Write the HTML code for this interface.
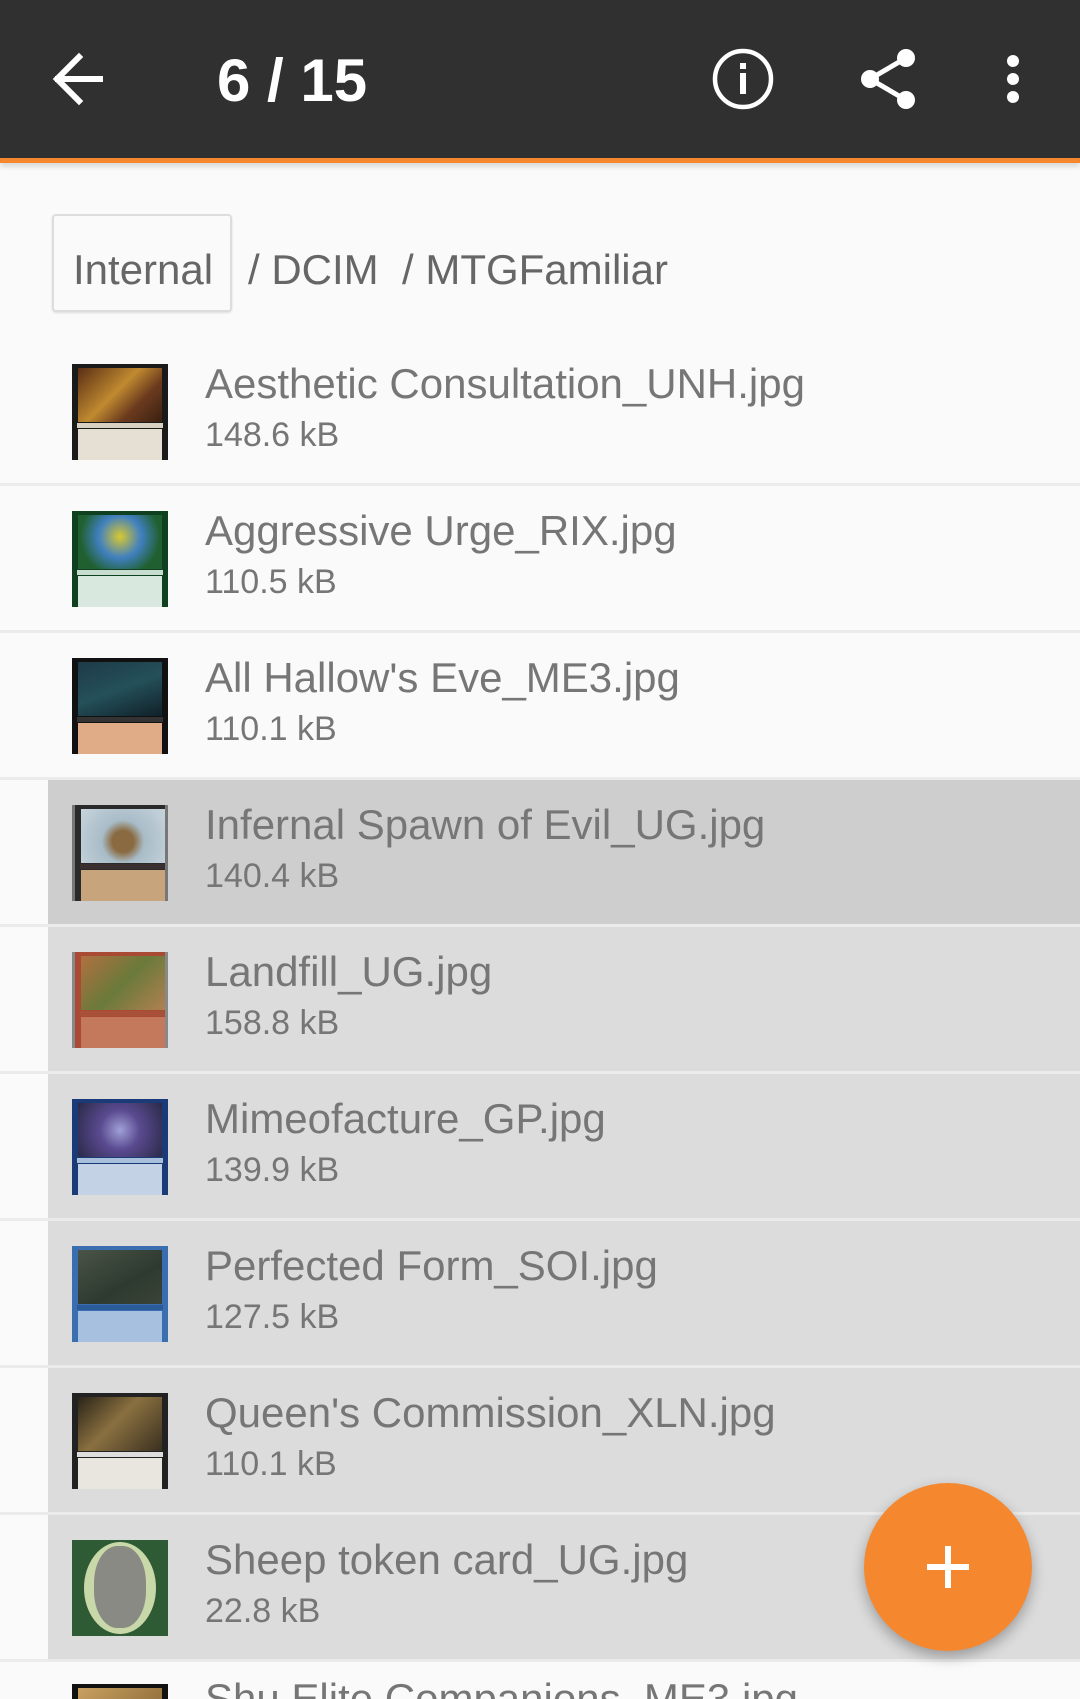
<!DOCTYPE html>
<html><head><meta charset="utf-8"><style>
*{margin:0;padding:0;box-sizing:border-box}
html,body{width:1080px;height:1699px;overflow:hidden}
body{background:#fafafa;font-family:"Liberation Sans",sans-serif}
#root{position:relative;width:1080px;height:1699px;overflow:hidden;background:#fafafa}
.bar{position:absolute;left:0;top:0;width:1080px;height:159px;background:#303030}
.ol{position:absolute;left:0;top:158px;width:1080px;height:5px;background:#f5882f;box-shadow:0 3px 6px rgba(0,0,0,.18)}
.title{position:absolute;left:217px;top:51px;font-size:60px;line-height:1;font-weight:bold;color:#fff}
.crumb{position:absolute;top:249px;font-size:42px;line-height:1;color:#666}
.chip{position:absolute;left:52px;top:214px;width:180px;height:98px;border:2px solid #ddd;border-radius:4px;background:#fafafa;box-shadow:0 1px 2px rgba(0,0,0,.12)}
.row{position:absolute;left:0;width:1080px;height:147px}
.sep{position:absolute;left:0;top:0;width:1080px;height:3px;background:#ebebeb}
.sel{position:absolute;left:48px;top:3px;width:1032px;height:144px;background:#dcdcdc}
.name{position:absolute;left:205px;top:27px;font-size:42px;line-height:1;color:#767676;white-space:nowrap}
.size{position:absolute;left:205px;top:82px;font-size:34px;line-height:1;color:#767676}
.th{position:absolute;left:72px;top:28px;width:96px;height:96px;overflow:hidden}
.art{position:absolute;left:6px;top:4px;width:84px;height:54px}
.tl{position:absolute;left:5px;top:59px;width:86px;height:5px}
.tb{position:absolute;left:6px;top:65px;width:84px;height:31px}
.fab{position:absolute;left:864px;top:1483px;width:168px;height:168px;border-radius:50%;background:#f5882f;box-shadow:0 6px 14px rgba(0,0,0,.3)}
</style></head><body><div id="root">
<div class="bar"></div><div class="ol"></div>
<svg style="position:absolute;left:0;top:0" width="1080" height="159">
<g stroke="#fff" stroke-width="6" fill="none" stroke-linecap="square">
<path d="M58 79H100M79 57L57 79L79 101"/>
</g>
<circle cx="743" cy="79" r="28" stroke="#fff" stroke-width="4.5" fill="none"/>
<rect x="740" y="73" width="6" height="21" fill="#fff"/><rect x="740" y="63" width="6" height="6" fill="#fff"/>
<g fill="#fff"><circle cx="906" cy="58" r="9"/><circle cx="870" cy="79" r="9"/><circle cx="906" cy="100" r="9"/></g>
<path d="M906 58L870 79L906 100" stroke="#fff" stroke-width="5" fill="none"/>
<g fill="#fff"><circle cx="1013" cy="61" r="6"/><circle cx="1013" cy="79" r="6"/><circle cx="1013" cy="97" r="6"/></g>
</svg>
<div class="title">6 / 15</div>
<div class="chip"></div>
<div class="crumb" style="left:73px">Internal</div>
<div class="crumb" style="left:248px">/ DCIM</div>
<div class="crumb" style="left:402px">/ MTGFamiliar</div>

<div class="row" style="top:336px"><div class="th" style="background:#1a1a1a"><div class="art" style="background:linear-gradient(135deg,#5a2e14,#c08a30 45%,#6b3a1e 70%,#3a2010)"></div><div class="tl" style="background:#d8d0c0"></div><div class="tb" style="background:#e6e0d4"></div></div><div class="name">Aesthetic Consultation_UNH.jpg</div><div class="size">148.6 kB</div></div>

<div class="row" style="top:483px"><div class="sep"></div><div class="th" style="background:#0f4020"><div class="art" style="background:radial-gradient(circle at 50% 40%,#d8c830,#4080c0 40%,#206030 75%)"></div><div class="tl" style="background:#c8dcd0"></div><div class="tb" style="background:#d8e8de"></div></div><div class="name">Aggressive Urge_RIX.jpg</div><div class="size">110.5 kB</div></div>

<div class="row" style="top:630px"><div class="sep"></div><div class="th" style="background:#111"><div class="art" style="background:linear-gradient(160deg,#1e3a48,#24505a 50%,#102028)"></div><div class="tl" style="background:#333"></div><div class="tb" style="background:#e0ac88"></div></div><div class="name">All Hallow's Eve_ME3.jpg</div><div class="size">110.1 kB</div></div>

<div class="row" style="top:777px"><div class="sep"></div><div class="sel" style="background:#cecece"></div><div class="th" style="background:#2a2a2a;border-left:3px solid #777;border-right:3px solid #777"><div class="art" style="background:radial-gradient(circle at 50% 60%,#8a6a40 20%,#a8bcc8 40%,#c8d4dc)"></div><div class="tl" style="background:#3a3030"></div><div class="tb" style="background:#c8a47c"></div></div><div class="name">Infernal Spawn of Evil_UG.jpg</div><div class="size">140.4 kB</div></div>

<div class="row" style="top:924px"><div class="sep"></div><div class="sel"></div><div class="th" style="background:#a84a34;border-left:3px solid #888;border-right:3px solid #888"><div class="art" style="background:linear-gradient(135deg,#b07040,#6a7a3a 50%,#b08050)"></div><div class="tl" style="background:#a85038"></div><div class="tb" style="background:#c4785c"></div></div><div class="name">Landfill_UG.jpg</div><div class="size">158.8 kB</div></div>

<div class="row" style="top:1071px"><div class="sep"></div><div class="sel"></div><div class="th" style="background:#1a3a78"><div class="art" style="background:radial-gradient(circle at 50% 50%,#a0a0d8,#5a4a90 40%,#2a2a48)"></div><div class="tl" style="background:#a8c0dc"></div><div class="tb" style="background:#c4d2e6"></div></div><div class="name">Mimeofacture_GP.jpg</div><div class="size">139.9 kB</div></div>

<div class="row" style="top:1218px"><div class="sep"></div><div class="sel"></div><div class="th" style="background:#3a6eb0"><div class="art" style="background:linear-gradient(150deg,#4a5448,#2e3a30 60%,#3a4438)"></div><div class="tl" style="background:#2a5a98"></div><div class="tb" style="background:#a8c0e0"></div></div><div class="name">Perfected Form_SOI.jpg</div><div class="size">127.5 kB</div></div>

<div class="row" style="top:1365px"><div class="sep"></div><div class="sel"></div><div class="th" style="background:#222"><div class="art" style="background:linear-gradient(135deg,#2a2418,#8a7040 45%,#3a3020)"></div><div class="tl" style="background:#ddd"></div><div class="tb" style="background:#e8e6de"></div></div><div class="name">Queen's Commission_XLN.jpg</div><div class="size">110.1 kB</div></div>

<div class="row" style="top:1512px"><div class="sep"></div><div class="sel"></div><div class="th" style="background:#2e5a34"><div style="position:absolute;left:12px;top:2px;width:72px;height:92px;border-radius:50%;background:#c8d8a8"></div><div style="position:absolute;left:22px;top:6px;width:52px;height:82px;border-radius:45%;background:#8a8a84"></div></div><div class="name">Sheep token card_UG.jpg</div><div class="size">22.8 kB</div></div>

<div class="row" style="top:1659px;height:40px;overflow:hidden"><div class="sep"></div><div class="th" style="background:#111;top:25px"><div class="art" style="background:linear-gradient(135deg,#c8a060,#806030)"></div></div><div class="name" style="top:19px">Shu Elite Companions_ME3.jpg</div></div>

<div class="fab"><div style="position:absolute;left:63px;top:81px;width:42px;height:6px;background:#fff"></div><div style="position:absolute;left:81px;top:63px;width:6px;height:42px;background:#fff"></div></div>
</div></body></html>
